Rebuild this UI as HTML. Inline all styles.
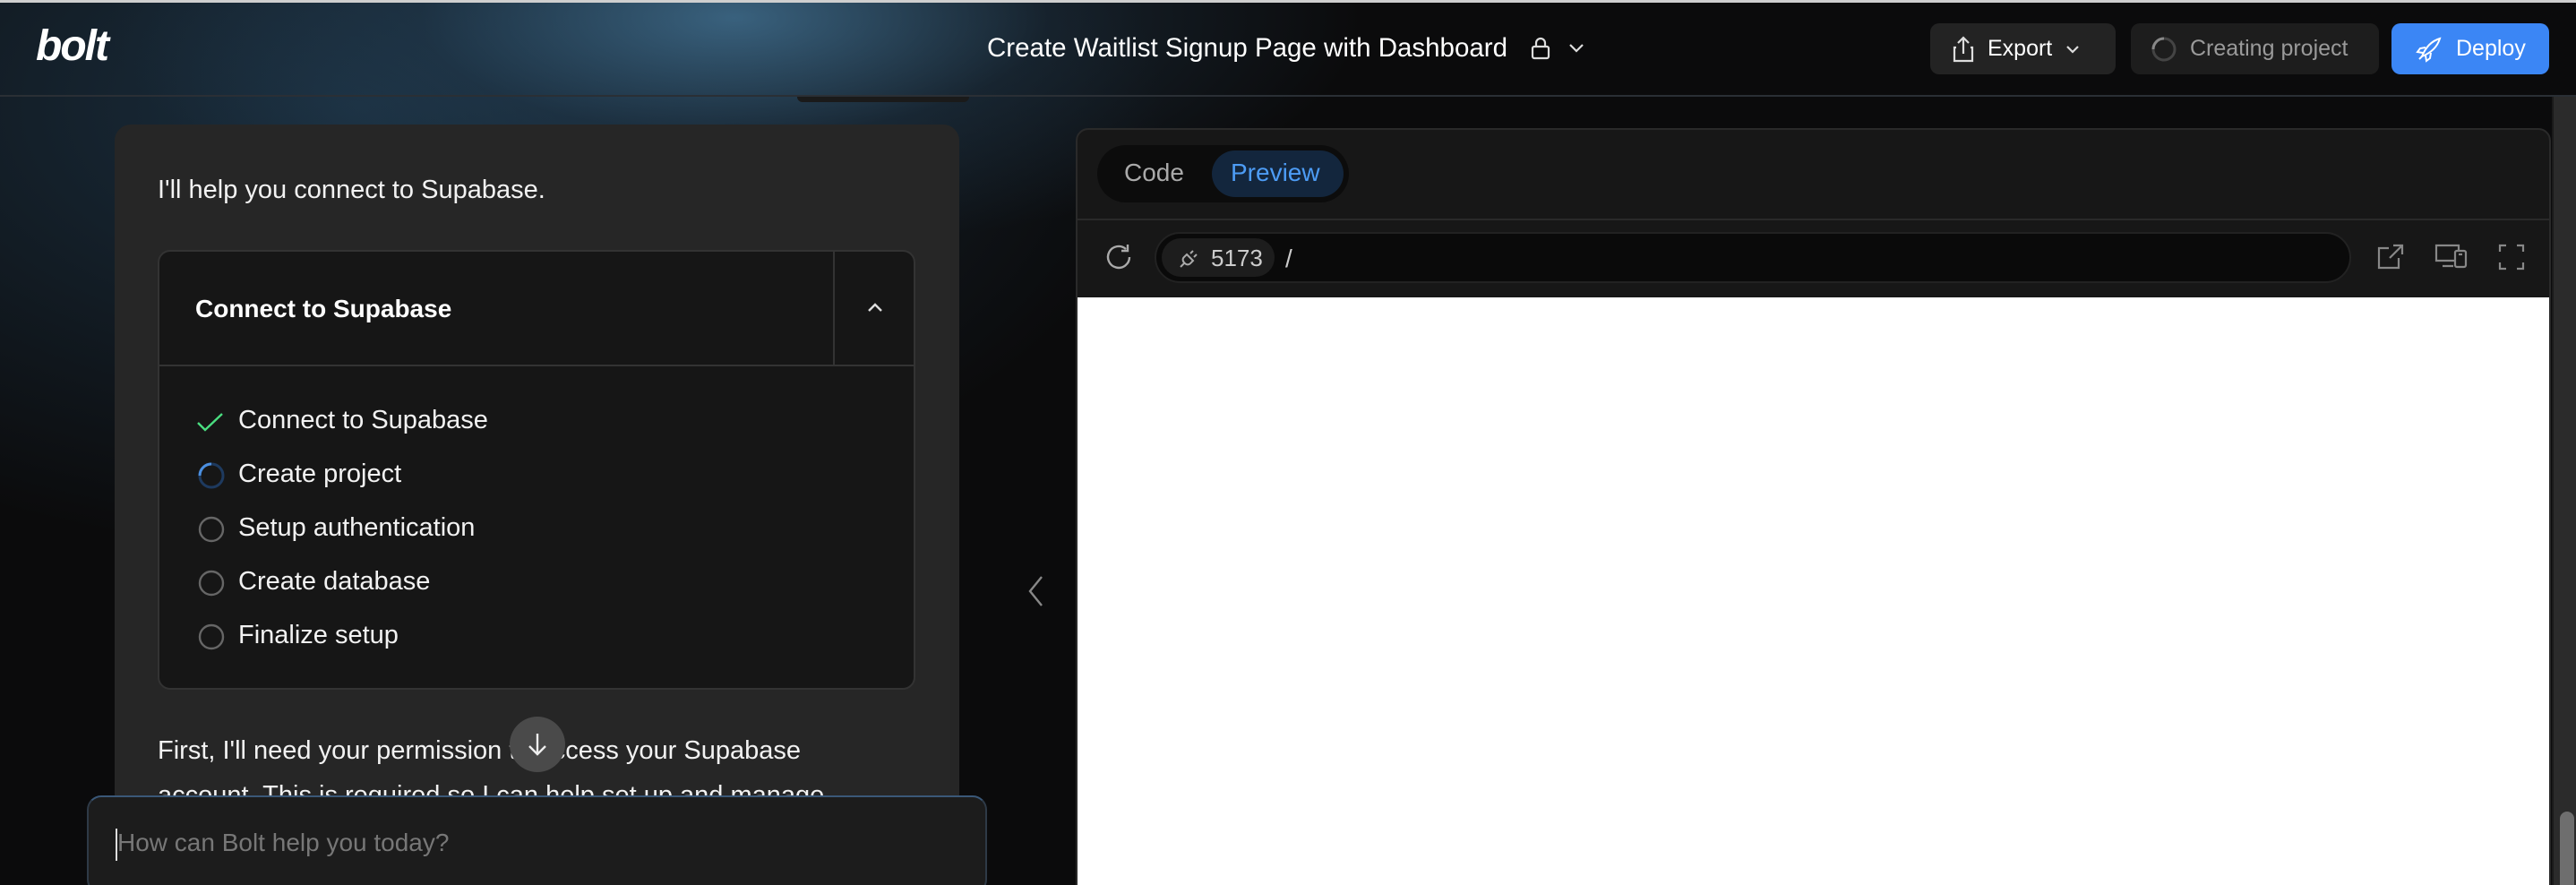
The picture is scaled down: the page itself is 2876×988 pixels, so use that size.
<!DOCTYPE html>
<html><head><meta charset="utf-8"><style>
*{box-sizing:border-box;margin:0;padding:0}
html,body{width:2876px;height:988px;overflow:hidden}
body{background:#0b0b0c;font-family:"Liberation Sans",sans-serif;color:#fff;position:relative}
.glow{position:absolute;left:0;top:0;width:2876px;height:988px;
background:radial-gradient(ellipse 700px 260px at 820px 20px,rgba(70,120,155,.75),rgba(40,70,95,.35) 50%,rgba(0,0,0,0) 100%),
radial-gradient(ellipse 900px 500px at 400px 120px,rgba(30,55,75,.8),rgba(0,0,0,0) 100%);}
.topstrip{position:absolute;left:0;top:0;width:2876px;height:3px;background:#cfcfcf}
.hdr{position:absolute;left:0;top:3px;width:2876px;height:105px;border-bottom:2px solid #2a2f35}
.abs{position:absolute}
.btn{position:absolute;top:26px;height:57px;border-radius:10px;display:flex;align-items:center;font-size:25px}
</style></head><body>
<div class="glow"></div>
<div class="topstrip"></div>
<div class="hdr"></div>
<div class="abs" style="left:40px;top:24px;font-size:48px;font-weight:bold;font-style:italic;letter-spacing:-2px;color:#fff">bolt</div>
<div class="abs" style="left:1102px;top:37px;font-size:29.5px;color:#fff">Create Waitlist Signup Page with Dashboard</div>
<svg class="abs" style="left:1708px;top:40px" width="24" height="28" viewBox="0 0 24 28" fill="none" stroke="#ddd" stroke-width="2.2"><rect x="3" y="12" width="18" height="13" rx="2"/><path d="M7 12V8a5 5 0 0 1 10 0v4"/></svg>
<svg class="abs" style="left:1750px;top:46px" width="20" height="14" viewBox="0 0 20 14" fill="none" stroke="#ddd" stroke-width="2.2"><path d="M3 4l7 7 7-7"/></svg>
<div class="btn" style="left:2155px;width:207px;background:#232323;padding-left:24px;color:#fff">
<svg width="26" height="32" viewBox="0 0 26 32" fill="none" stroke="#ddd" stroke-width="2.2"><path d="M13 3v18M7 9l6-6 6 6M5 14H3v15h20V14h-2"/></svg>
<span style="margin-left:14px">Export</span>
<svg style="margin-left:14px" width="18" height="12" viewBox="0 0 18 12" fill="none" stroke="#ddd" stroke-width="2.2"><path d="M3 3l6 6 6-6"/></svg></div>
<div class="btn" style="left:2379px;width:277px;background:#1d1d1d;padding-left:22px;color:#9a9a9a">
<svg width="30" height="30" viewBox="0 0 30 30" fill="none" stroke-width="3"><circle cx="15" cy="15" r="12" stroke="#444"/><path d="M15 3a12 12 0 0 0-12 12" stroke="#888"/></svg>
<span style="margin-left:14px">Creating project</span></div>
<div class="btn" style="left:2670px;width:176px;background:#3b86f5;padding-left:26px;color:#fff">
<svg width="32" height="32" viewBox="0 0 32 32" fill="none" stroke="#fff" stroke-width="2"><path d="M8 24c4-10 10-17 20-20-3 10-10 16-20 20zM12 14l-6 1-3 4 6 1M18 20l-1 6-4 3-1-6M5 27l5-5"/></svg>
<span style="margin-left:14px">Deploy</span></div>

<!-- chat panel -->
<div class="abs" style="left:890px;top:108px;width:192px;height:6px;background:#1a1a1a;border-radius:0 0 6px 6px"></div>
<div class="abs" style="left:128px;top:139px;width:943px;height:860px;background:#262626;border-radius:18px"></div>
<div class="abs" style="left:176px;top:196px;font-size:29px;color:#f2f2f2">I'll help you connect to Supabase.</div>
<div class="abs" style="left:176px;top:279px;width:846px;height:491px;background:#161616;border:2px solid #333;border-radius:14px;overflow:hidden">
<div class="abs" style="left:0;top:0;width:846px;height:128px;border-bottom:2px solid #333"></div>
<div class="abs" style="left:752px;top:0;width:2px;height:128px;background:#333"></div>
<div class="abs" style="left:40px;top:48px;font-size:28px;font-weight:bold;color:#fff">Connect to Supabase</div>
<svg class="abs" style="left:788px;top:54px" width="22" height="16" viewBox="0 0 22 16" fill="none" stroke="#ddd" stroke-width="2.4"><path d="M4 12l7-7 7 7"/></svg>
</div>
<div class="abs" style="left:218px;top:452px;font-size:29px;line-height:34px;color:#f2f2f2">
<div style="position:absolute;top:0;left:0;width:400px"><svg style="position:absolute;left:0;top:6px" width="34" height="26" viewBox="0 0 34 26" fill="none" stroke="#4ade80" stroke-width="2.4"><path d="M3 14l8 8L30 4"/></svg><span style="position:absolute;left:48px;white-space:nowrap">Connect to Supabase</span></div>
<div style="position:absolute;top:60px;left:0"><svg style="position:absolute;left:2px;top:3px" width="32" height="32" viewBox="0 0 32 32" fill="none" stroke-width="3"><circle cx="16" cy="16" r="13" stroke="#1e3a5f"/><path d="M3 16A13 13 0 0 1 16 3" stroke="#4b8fe0"/></svg><span style="position:absolute;left:48px;white-space:nowrap">Create project</span></div>
<div style="position:absolute;top:120px;left:0"><svg style="position:absolute;left:2px;top:3px" width="32" height="32" viewBox="0 0 32 32" fill="none" stroke="#666" stroke-width="2.4"><circle cx="16" cy="16" r="13"/></svg><span style="position:absolute;left:48px;white-space:nowrap">Setup authentication</span></div>
<div style="position:absolute;top:180px;left:0"><svg style="position:absolute;left:2px;top:3px" width="32" height="32" viewBox="0 0 32 32" fill="none" stroke="#666" stroke-width="2.4"><circle cx="16" cy="16" r="13"/></svg><span style="position:absolute;left:48px;white-space:nowrap">Create database</span></div>
<div style="position:absolute;top:240px;left:0"><svg style="position:absolute;left:2px;top:3px" width="32" height="32" viewBox="0 0 32 32" fill="none" stroke="#666" stroke-width="2.4"><circle cx="16" cy="16" r="13"/></svg><span style="position:absolute;left:48px;white-space:nowrap">Finalize setup</span></div>
</div>
<div class="abs" style="left:176px;top:813px;font-size:29px;line-height:50px;color:#f2f2f2;width:790px">First, I'll need your permission to access your Supabase account. This is required so I can help set up and manage your</div>
<div class="abs" style="left:569px;top:800px;width:62px;height:62px;border-radius:50%;background:#4a4a4a;display:flex;align-items:center;justify-content:center">
<svg width="26" height="30" viewBox="0 0 26 30" fill="none" stroke="#eee" stroke-width="2.4"><path d="M13 3v23M4 17l9 9 9-9"/></svg></div>
<div class="abs" style="left:97px;top:888px;width:1005px;height:110px;background:#1c1c1c;border:2px solid #2e3a47;border-top-color:#3a5878;border-radius:16px"></div>
<div class="abs" style="left:129px;top:925px;width:2px;height:36px;background:#ddd"></div>
<div class="abs" style="left:131px;top:925px;font-size:28px;color:#777">How can Bolt help you today?</div>
<svg class="abs" style="left:1145px;top:640px" width="22" height="40" viewBox="0 0 22 40" fill="none" stroke="#888" stroke-width="2.4"><path d="M18 4L5 20l13 16"/></svg>

<!-- preview panel -->
<div class="abs" style="left:1201px;top:143px;width:1647px;height:860px;background:#171717;border:2px solid #2a2a2a;border-radius:14px;overflow:hidden">
<div class="abs" style="left:0;top:99px;width:1647px;height:2px;background:#2a2a2a"></div>
<div class="abs" style="left:22px;top:17px;width:281px;height:64px;border-radius:32px;background:#0c0c0c"></div>
<div class="abs" style="left:52px;top:32px;font-size:28px;color:#aaa">Code</div>
<div class="abs" style="left:150px;top:23px;width:147px;height:52px;border-radius:26px;background:#13263d"></div>
<div class="abs" style="left:171px;top:32px;font-size:28px;color:#4d9cf5">Preview</div>
<svg class="abs" style="left:28px;top:124px" width="36" height="36" viewBox="0 0 36 36" fill="none" stroke="#aaa" stroke-width="2.4"><path d="M30 18A12 12 0 1 1 26 9M28 4v7h-7"/></svg>
<div class="abs" style="left:86px;top:114px;width:1336px;height:57px;border-radius:29px;background:#0a0a0a;border:2px solid #222"></div>
<div class="abs" style="left:94px;top:121px;width:126px;height:43px;border-radius:22px;background:#1d1d1d"></div>
<svg class="abs" style="left:112px;top:130px" width="26" height="26" viewBox="0 0 26 26" fill="none" stroke="#aaa" stroke-width="2"><path d="M3 23l5-5M10 9l7 7-3 3a4 4 0 0 1-6 0l-1-1a4 4 0 0 1 0-6zM14 8l3-3M18 12l3-3"/></svg>
<div class="abs" style="left:149px;top:128px;font-size:26px;color:#ccc">5173</div>
<div class="abs" style="left:232px;top:128px;font-size:28px;color:#ccc">/</div>
<svg class="abs" style="left:1448px;top:124px" width="36" height="36" viewBox="0 0 36 36" fill="none" stroke="#888" stroke-width="2.2"><path d="M16 8H5v22h22V19M21 5h10v10M31 5L17 19"/></svg>
<svg class="abs" style="left:1514px;top:124px" width="40" height="36" viewBox="0 0 40 36" fill="none" stroke="#888" stroke-width="2.2"><path d="M24 22H3V5h25v6M10 28h12"/><rect x="24" y="11" width="12" height="18" rx="2"/><path d="M28 15h4"/></svg>
<svg class="abs" style="left:1584px;top:124px" width="34" height="36" viewBox="0 0 34 36" fill="none" stroke="#888" stroke-width="2.2"><path d="M4 12V5h7M23 5h7v7M30 24v7h-7M11 31H4v-7"/></svg>
<div class="abs" style="left:0;top:187px;width:1647px;height:700px;background:#fff"></div>
</div>
<div class="abs" style="left:2849px;top:108px;width:27px;height:880px;background:#2b2b2b;border-left:2px solid #1a1a1a"></div>
<div class="abs" style="left:2858px;top:906px;width:16px;height:90px;border-radius:8px;background:#6e6e6e"></div>
</body></html>
